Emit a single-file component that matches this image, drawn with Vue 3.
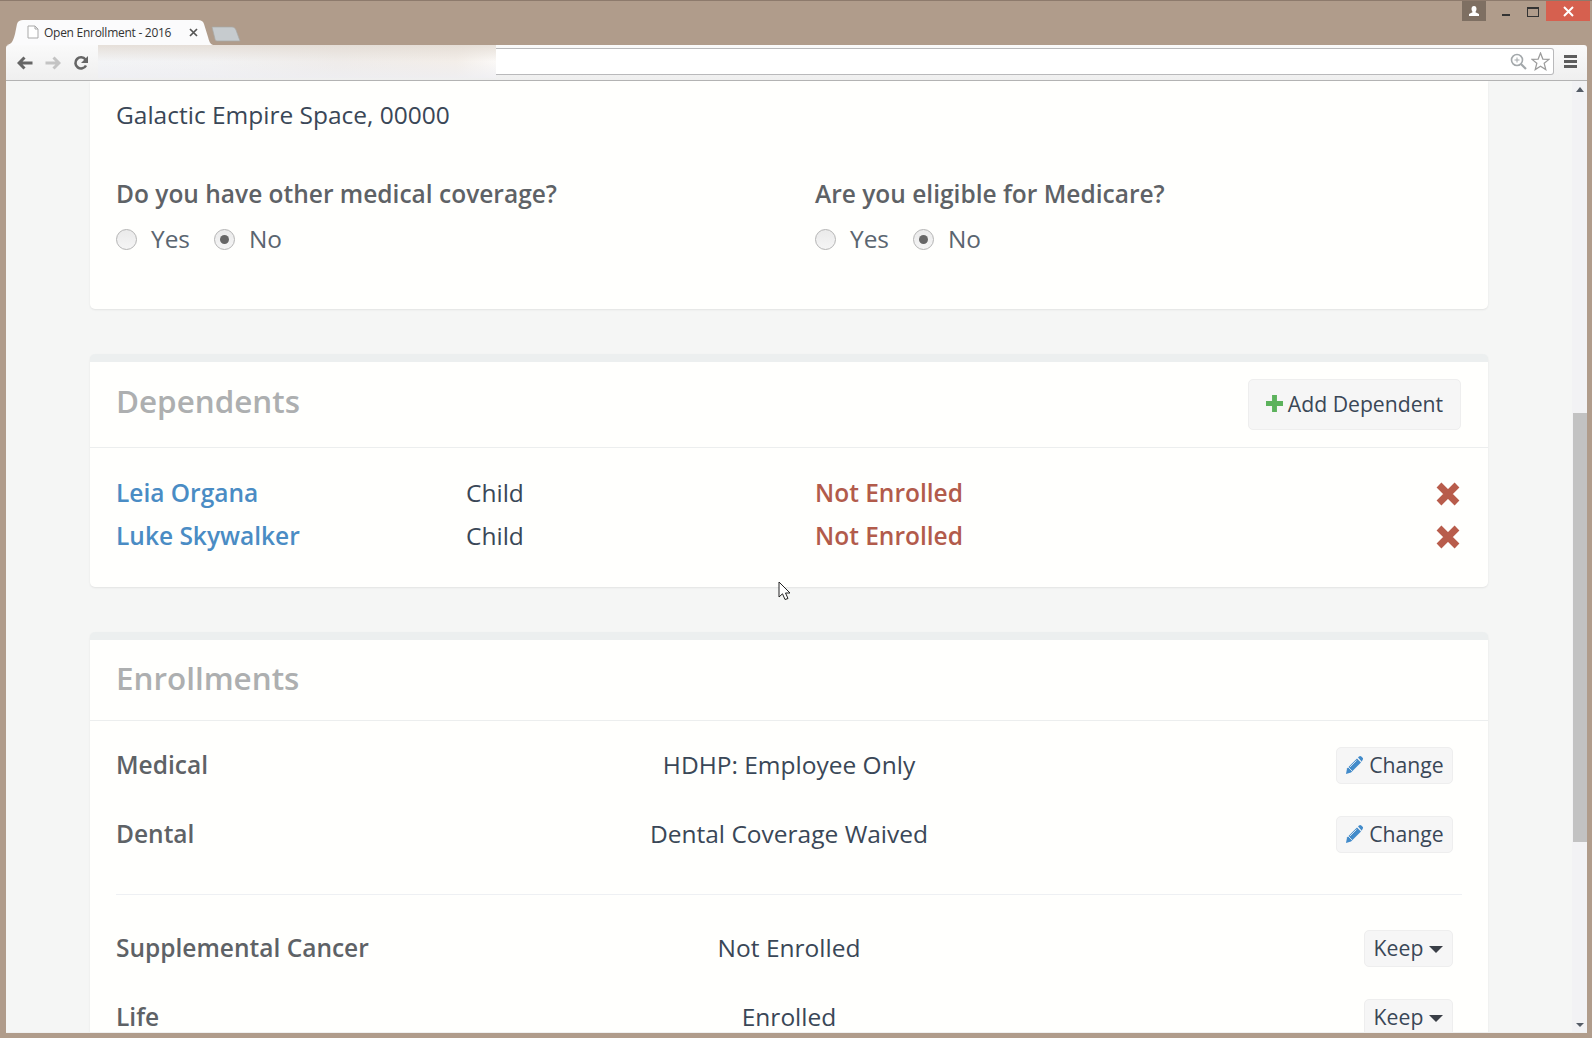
<script setup>
const dependents = [
  { name: 'Leia Organa', relation: 'Child', status: 'Not Enrolled' },
  { name: 'Luke Skywalker', relation: 'Child', status: 'Not Enrolled' },
]
const coverage = [
  { label: 'Medical', value: 'HDHP: Employee Only' },
  { label: 'Dental', value: 'Dental Coverage Waived' },
]
const extras = [
  { label: 'Supplemental Cancer', value: 'Not Enrolled' },
  { label: 'Life', value: 'Enrolled' },
]
const questions = ['Do you have other medical coverage?', 'Are you eligible for Medicare?']
</script>

<template>
  <div class="window">
    <header class="tabstrip">
      <div class="tab">
        <svg class="tab-shape" width="206" height="26" viewBox="0 0 206 26"><path d="M0 26C5 25 6 22 8 15L10 5C11 2 13 1 16 1H191C194 1 196 2 197 5L201 18C202 22 203 25 206 26Z" fill="#fbfbfc"/></svg>
        <svg class="favicon" width="12" height="14" viewBox="0 0 12 14"><path d="M1 1H8L11 4V13H1Z M8 1V4H11" fill="#fff" stroke="#a9a9a9"/></svg>
        <span class="tab-title">Open Enrollment - 2016</span>
        <svg class="tab-close" width="9" height="9" viewBox="0 0 9 9"><path d="M1 1L8 8M8 1L1 8" stroke="#555" stroke-width="1.7"/></svg>
      </div>
      <svg class="newtab" width="30" height="16" viewBox="0 0 30 16"><path d="M1 1H21C23 1 24 2 25 4L29 15H6C5 15 4 14 4 13Z" fill="#c6cbce" stroke="#a8a9a6" stroke-width=".7"/></svg>
      <div class="win-controls">
        <div class="profile"><svg width="12" height="11" viewBox="0 0 12 11"><path d="M6 0C8 0 8.500 1.500 8.500 3C8.500 4.500 7.500 5.500 7.500 6.200L11 8V10H1V8L4.500 6.200C4.500 5.500 3.500 4.500 3.500 3C3.500 1.500 4 0 6 0Z" fill="#fff"/></svg></div>
        <div class="minimize"><i></i></div>
        <div class="maximize"><i></i></div>
        <div class="close"><svg width="11" height="11" viewBox="0 0 11 11"><path d="M1 1L10 10M10 1L1 10" stroke="#fff" stroke-width="2"/></svg></div>
      </div>
    </header>
    <div class="toolbar">
      <div class="nav">
        <svg width="16" height="14" viewBox="0 0 16 14"><path d="M15.500 7H3M7.500 1.500L2 7L7.500 12.500" fill="none" stroke="#666" stroke-width="3"/></svg>
        <svg width="16" height="14" viewBox="0 0 16 14"><path d="M.5 7H13M8.500 1.500L14 7L8.500 12.500" fill="none" stroke="#c4c4c4" stroke-width="3"/></svg>
        <svg width="16" height="16" viewBox="0 0 16 16"><path d="M13 10.500A5.600 5.600 0 1 1 12.500 4.500" fill="none" stroke="#666" stroke-width="2.600"/><path d="M15 1V8H8Z" fill="#666"/></svg>
      </div>
      <div class="blurred"></div>
      <div class="omnibox">
        <svg width="17" height="17" viewBox="0 0 17 17"><circle cx="7" cy="7" r="5.500" fill="none" stroke="#a3a8ab" stroke-width="1.600"/><path d="M11 11L16 16" stroke="#a3a8ab" stroke-width="2.200"/><path d="M7 4.500V9.500M4.500 7H9.500" stroke="#a3a8ab"/></svg>
        <svg width="19" height="19" viewBox="0 0 18 18"><path d="M9 1L11.200 6.700L17 7L12.500 10.700L14 16.700L9 13.500L4 16.700L5.500 10.700L1 7L6.800 6.700Z" fill="#fff" stroke="#9c9c9c" stroke-width="1.200"/></svg>
      </div>
      <div class="menu"><i></i><i></i><i></i></div>
    </div>
    <div class="viewport">
      <main class="page">
        <section class="card first">
          <p class="address">Galactic Empire Space, 00000</p>
          <div class="questions">
            <div v-for="q in questions" :key="q" class="question">
              <h4>{{ q }}</h4>
              <div class="radios">
                <span class="radio"></span><span class="radio-label">Yes</span>
                <span class="radio on"></span><span class="radio-label">No</span>
              </div>
            </div>
          </div>
        </section>
        <section class="card">
          <div class="card-head">
            <h2>Dependents</h2>
            <button class="btn add">
              <svg width="17" height="17" viewBox="0 0 16 16"><path d="M8 0V16M0 8H16" stroke="#5cb25c" stroke-width="4.600"/></svg>
              Add Dependent
            </button>
          </div>
          <div class="dep-list">
            <div v-for="d in dependents" :key="d.name" class="dep">
              <a class="dep-name">{{ d.name }}</a>
              <span>{{ d.relation }}</span>
              <span class="status">{{ d.status }}</span>
              <svg class="remove" width="24" height="24" viewBox="0 0 24 24"><path d="M3 3L21 21M21 3L3 21" stroke="#b85c4b" stroke-width="6.800"/></svg>
            </div>
          </div>
        </section>
        <section class="card last">
          <div class="card-head enroll-head"><h2>Enrollments</h2></div>
          <div class="enroll-body">
            <div v-for="c in coverage" :key="c.label" class="enroll-row">
              <span class="enroll-label">{{ c.label }}</span>
              <span class="enroll-value">{{ c.value }}</span>
              <span class="enroll-action">
                <button class="btn small">
                  <svg width="18" height="20" viewBox="0 0 18 20"><path d="M1 19L2 13.500L12 3.500L16 7.500L6 17.500Z" fill="#428bca"/><path d="M13 2.500L14 1.500C14.800 .7 15.600 .7 16.300 1.400L17.600 2.700C18.300 3.400 18.300 4.200 17.500 5L16.800 6.700Z" fill="#428bca"/><path d="M3 12L7 16M4.800 12.200L11.500 5.500" stroke="#f6f6f6" stroke-width=".8" fill="none"/></svg>
                  Change
                </button>
              </span>
            </div>
            <hr />
            <div v-for="e in extras" :key="e.label" class="enroll-row">
              <span class="enroll-label">{{ e.label }}</span>
              <span class="enroll-value">{{ e.value }}</span>
              <span class="enroll-action">
                <button class="btn small keep">Keep <i class="caret"></i></button>
              </span>
            </div>
          </div>
        </section>
      </main>
      <div class="scrollbar">
        <i class="arrow up"></i>
        <div class="thumb"></div>
        <i class="arrow down"></i>
      </div>
      <svg class="cursor" width="14" height="21" viewBox="0 0 14 21"><path d="M1 1V16L4.500 12.800L7 18.500L10 17.500L7.500 12H12Z" fill="#fff" stroke="#222" stroke-width="1"/></svg>
    </div>
  </div>
</template>

<style scoped>
.window { width: 1592px; height: 1038px; box-sizing: border-box; background: #b09c8b; border-top: 1px solid #8d7a6c; padding: 0 5px 5px 6px; display: flex; flex-direction: column; overflow: hidden; font-family: "Open Sans", sans-serif; color: #3a4757; }
.tabstrip { height: 44px; flex: none; display: flex; align-items: flex-end; position: relative; margin-right: -3px; }
.tab { position: relative; width: 206px; height: 26px; margin-left: 1px; display: flex; align-items: center; flex: none; }
.tab-shape { position: absolute; left: 0; top: 0; }
.favicon { position: relative; margin-left: 20px; }
.tab-title { position: relative; margin-left: 5px; font-size: 12px; color: #333; white-space: nowrap; width: 135px; letter-spacing: -.27px; }
.tab-close { position: relative; margin-left: 10px; }
.newtab { margin: 0 0 3px -2px; flex: none; }
.win-controls { margin-left: auto; align-self: flex-start; display: flex; height: 20px; }
.profile { width: 24px; height: 20px; background: #7e6f62; display: flex; align-items: center; justify-content: center; }
.minimize { width: 38px; display: flex; align-items: center; justify-content: center; }
.minimize i { width: 8px; height: 2px; background: #333; margin-top: 7px; margin-left: 2px; }
.maximize { width: 18px; display: flex; align-items: center; justify-content: center; }
.maximize i { width: 10px; height: 7px; border: 1px solid #333; border-top-width: 2px; margin-top: 1px; }
.close { width: 44px; margin-left: 4px; background: #d6604f; display: flex; align-items: center; justify-content: center; }
.toolbar { height: 36px; flex: none; box-sizing: border-box; background: linear-gradient(#fafafa, #efefef); border-bottom: 1px solid #b3b3b3; border-radius: 3px 3px 0 0; display: flex; align-items: center; position: relative; }
.nav { width: 92px; flex: none; display: flex; align-items: center; gap: 12px; padding-left: 11px; box-sizing: border-box; }
.blurred { width: 398px; height: 33px; flex: none; margin-top: -2px; background: linear-gradient(rgba(226, 218, 210, .8), rgba(255, 255, 255, 0) 50%, rgba(238, 238, 242, .8)), linear-gradient(90deg, #f3f4f6 0%, #f2f2f3 28%, #efecea 60%, #f3eee9 90%, #fbf9f7 100%); }
.omnibox { flex: 1; height: 27px; box-sizing: border-box; background: #fff; border: 1px solid #b9b9bb; border-left: 0; border-radius: 0 3px 3px 0; display: flex; align-items: center; justify-content: flex-end; gap: 4px; padding-right: 3px; margin-top: -2px; }
.menu { width: 33px; flex: none; display: flex; flex-direction: column; align-items: center; gap: 2px; margin-top: -2px; }
.menu i { display: block; width: 13px; height: 3px; background: #5d5d5d; }
.viewport { flex: 1; min-height: 0; display: flex; overflow: hidden; position: relative; background: #f5f6f5; border-bottom: 1px solid #f0f0f0; }
.page { width: 1566px; flex: none; box-sizing: border-box; padding: 0 84px; height: 1100px; display: flex; flex-direction: column; gap: 45px; }
.card { background: #fffffd; border-top: 8px solid #ecefef; border-radius: 5px; box-shadow: 0 1px 2px rgba(0, 0, 0, .08); flex: none; }
.card.first { border-top: 0; border-radius: 0 0 5px 5px; height: 228px; box-sizing: border-box; padding: 16px 26px 0; }
.card.last { height: 500px; }
.address { margin: 0; font-size: 24.5px; line-height: 36px; }
.questions { display: grid; grid-template-columns: 699px 1fr; margin-top: 45px; }
h4 { margin: 0; font-size: 24.5px; font-weight: 600; line-height: 32px; color: #5e6266; }
.radios { display: flex; align-items: center; margin-top: 13px; font-size: 24.4px; line-height: 32px; color: #5a6570; }
.radio { width: 21px; height: 21px; box-sizing: border-box; border-radius: 50%; border: 1px solid #b4b4b4; background: linear-gradient(#eaeaea, #f5f5f5); margin-right: 14px; display: flex; align-items: center; justify-content: center; }
.radio.on::after { content: ""; width: 9px; height: 9px; border-radius: 50%; background: #666; }
.radio-label { margin-right: 24px; }
.card-head { height: 86px; box-sizing: border-box; border-bottom: 1px solid #eceeee; padding: 0 27px 0 26px; display: flex; align-items: flex-start; justify-content: space-between; }
.enroll-head { height: 81px; }
h2 { margin: 17px 0 0; font-size: 31.4px; font-weight: 600; line-height: 44px; color: #adafb0; }
.enroll-head h2 { margin-top: 16px; }
.btn { font-family: inherit; color: #3a4757; background: #f6f6f6; border: 1px solid #eeeeee; border-radius: 5px; font-size: 21.2px; display: inline-flex; align-items: center; padding: 0 0 2px; }
.add { height: 51px; width: 213px; margin-top: 17px; justify-content: center; gap: 5px; }
.dep-list { padding: 23px 26px 30px; }
.dep { display: grid; grid-template-columns: 350px 349px 1fr 24px; height: 43px; align-items: center; font-size: 24.5px; }
.dep-name { color: #4a8cc4; font-weight: 600; }
.status { color: #b25b4b; font-weight: 600; }
.remove { margin-top: 2px; margin-left: -2px; }
.enroll-body { padding: 26px 26px 0; }
.enroll-row { display: grid; grid-template-columns: 1fr 1fr 1fr; height: 69px; align-items: flex-start; font-size: 24.5px; }
.enroll-label { font-weight: 600; color: #5e6266; line-height: 36px; }
.enroll-value { text-align: center; line-height: 36px; white-space: nowrap; }
.enroll-action { display: flex; justify-content: flex-end; padding-right: 9px; }
.small { height: 37px; width: 117px; justify-content: center; gap: 6px; }
.keep { width: 89px; gap: 6px; }
.caret { width: 0; height: 0; border-left: 7px solid transparent; border-right: 7px solid transparent; border-top: 7px solid #3a3f47; margin-top: 4px; }
hr { border: 0; border-top: 1px solid #eef0f3; margin: 9px 0 35px; }
.scrollbar { width: 15px; flex: none; background: #f2f2f4; display: flex; flex-direction: column; align-items: center; }
.arrow { width: 0; height: 0; border-left: 4px solid transparent; border-right: 4px solid transparent; }
.arrow.up { border-bottom: 5px solid #555c66; margin-top: 6px; }
.arrow.down { border-top: 4px solid #555c66; margin-bottom: 5px; }
.thumb { width: 14px; height: 429px; background: #c2c2c2; margin-top: 321px; margin-bottom: auto; }
.cursor { position: absolute; left: 772px; top: 500px; }
</style>
